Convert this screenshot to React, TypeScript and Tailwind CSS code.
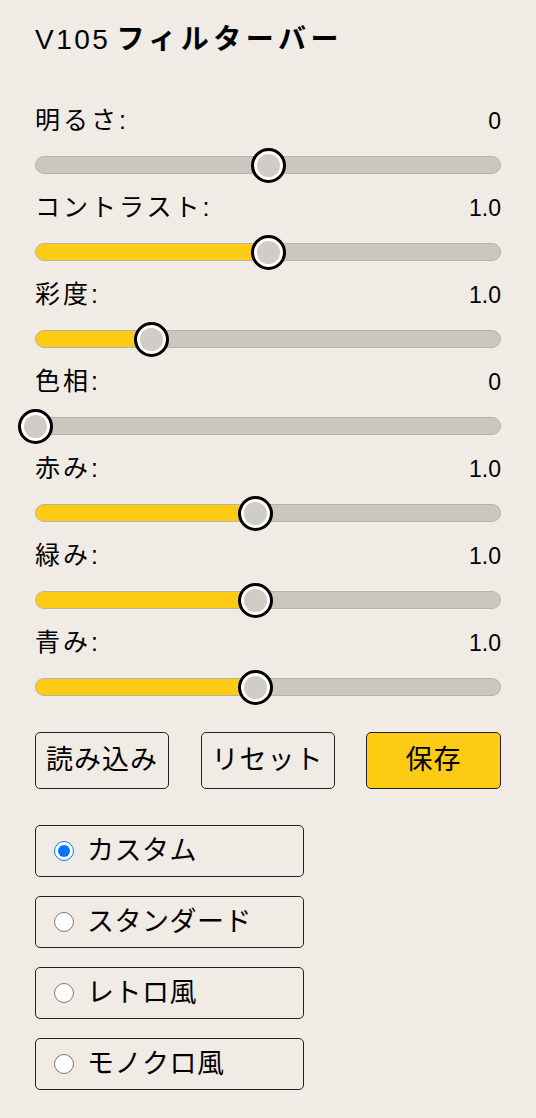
import { useState } from "react";

const FONT = { fontFamily: "'Liberation Sans', 'Noto Sans CJK JP', sans-serif" };

type Row = { label: string; value: string; pos: number; fill: number };

const ROWS: Row[] = [
  { label: "明るさ:", value: "0", pos: 0.5, fill: 0 },
  { label: "コントラスト:", value: "1.0", pos: 0.5, fill: 0.5 },
  { label: "彩度:", value: "1.0", pos: 0.25, fill: 0.25 },
  { label: "色相:", value: "0", pos: 0, fill: 0 },
  { label: "赤み:", value: "1.0", pos: 0.474, fill: 0.474 },
  { label: "緑み:", value: "1.0", pos: 0.474, fill: 0.474 },
  { label: "青み:", value: "1.0", pos: 0.474, fill: 0.474 },
];

const PRESETS = ["カスタム", "スタンダード", "レトロ風", "モノクロ風"];

function Slider({ pos, fill }: { pos: number; fill: number }) {
  return (
    <div className="relative h-[36px] flex items-center">
      <div className="relative w-full h-[18px] rounded-full bg-[#cbc7c0] border border-[#b7b2aa] overflow-hidden">
        {fill > 0 && (
          <div className="absolute left-0 top-0 bottom-0 bg-[#fccb14]" style={{ width: `${fill * 100}%` }} />
        )}
      </div>
      <div
        className="absolute top-[1px] w-[35px] h-[35px] -ml-[17.5px] rounded-full border-[3px] border-black bg-[#d0ccc6] shadow-[inset_0_0_0_3px_#fff]"
        style={{ left: `${pos * 100}%` }}
      />
    </div>
  );
}

export default function App() {
  const [sel, setSel] = useState(0);
  return (
    <div className="min-h-[1118px] w-full bg-[#f1ebe5] text-black px-[35px] pt-[22px]" style={FONT}>
      <h1 className="flex items-center gap-[6px] text-[28px] leading-[36px] font-bold">
        <span className="font-normal tracking-[2.5px]">V105</span>
        <span className="tracking-[4.5px]">フィルターバー</span>
      </h1>

      <div className="mt-[48px] flex flex-col">
        {ROWS.map((r) => (
          <div key={r.label} className="flex flex-col h-[87px]">
            <div className="flex justify-between items-center h-[30px]">
              <span className="text-[25px] tracking-[3px]">{r.label}</span>
              <span className="text-[23px]">{r.value}</span>
            </div>
            <div className="mt-[11px]">
              <Slider pos={r.pos} fill={r.fill} />
            </div>
          </div>
        ))}
      </div>

      <div className="mt-[17px] flex justify-between text-[27px] tracking-[1px]">
        <button className="w-[134px] h-[57px] rounded-[5px] border border-[#222] bg-[#f1ebe5]">読み込み</button>
        <button className="w-[134px] h-[57px] rounded-[5px] border border-[#222] bg-[#f1ebe5]">リセット</button>
        <button className="w-[135px] h-[57px] rounded-[5px] border border-[#222] bg-[#fccb14]">保存</button>
      </div>

      <div className="mt-[36px] flex flex-col gap-[19px] w-[269px]">
        {PRESETS.map((p, i) => (
          <label
            key={p}
            className="flex items-center h-[52px] rounded-[5px] border border-[#222] pl-[18px] text-[27px] tracking-[0.5px] cursor-pointer"
          >
            <input
              type="radio"
              name="preset"
              checked={sel === i}
              onChange={() => setSel(i)}
              className="w-[20px] h-[20px] m-0 accent-[#0075ff]"
            />
            <span className="ml-[13px]">{p}</span>
          </label>
        ))}
      </div>
    </div>
  );
}
